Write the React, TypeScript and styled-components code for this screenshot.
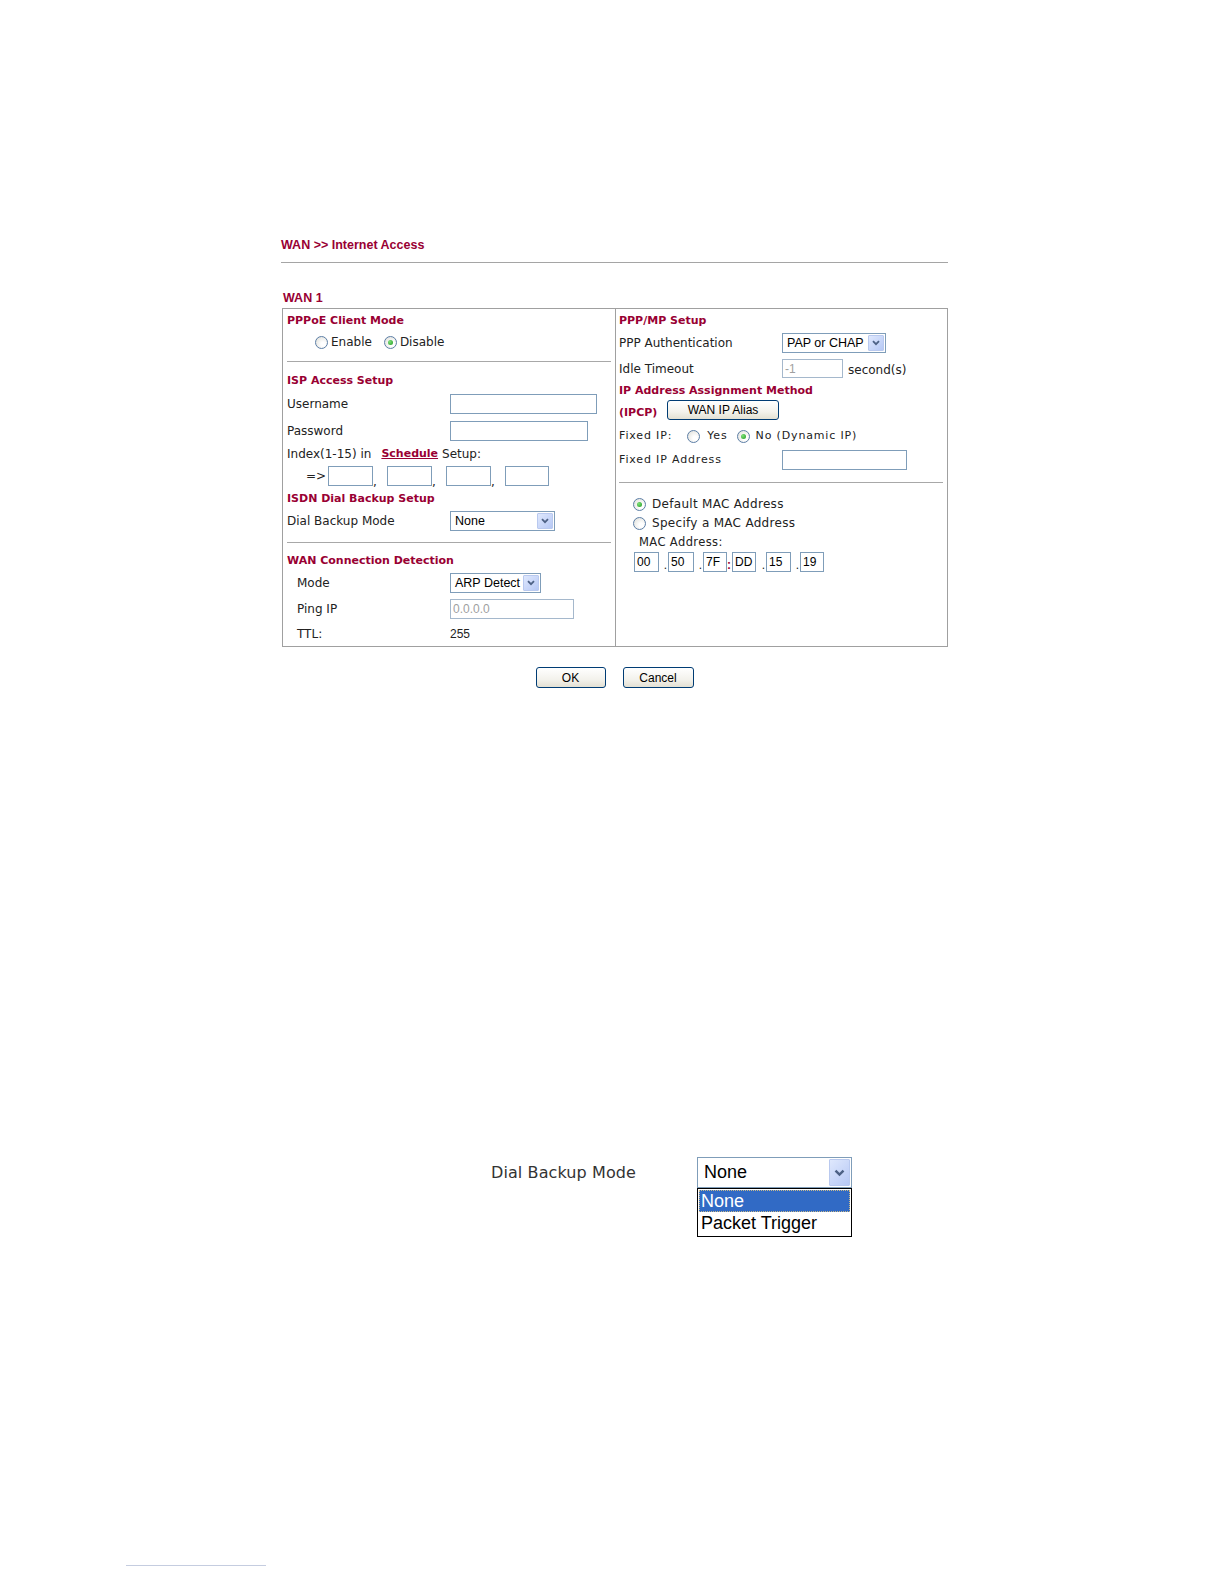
import { createGlobalStyle, styled } from 'styled-components';

const GlobalStyle = createGlobalStyle`
  html, body { margin: 0; padding: 0; background: #fff; overflow: hidden; }
  body { font-family: 'DejaVu Sans', Verdana, sans-serif; color: #222; }
  * { box-sizing: border-box; }
`;

const Page = styled.div`
  width: 1224px;
  height: 1584px;
  overflow: hidden;
  padding-top: 237px;
  display: flex;
  flex-direction: column;
`;

const Sheet = styled.div`
  margin-left: 281px;
  width: 667px;
  display: flex;
  flex-direction: column;
`;

const Title = styled.div`
  font: bold 12.5px/16px 'Liberation Sans', Arial, sans-serif;
  color: #990033;
`;

const Rule = styled.div`
  margin-top: 9px;
  border-top: 1px solid #a5a5a5;
`;

const WanLabel = styled.div`
  margin: 27px 0 2px;
  padding-left: 2px;
  font: bold 12.5px/16px 'Liberation Sans', Arial, sans-serif;
  color: #990033;
`;

const Table = styled.div`
  margin-left: 1px;
  width: 666px;
  display: grid;
  grid-template-columns: 332px 332px;
  border: 1px solid #a0a0a0;
`;

const Column = styled.div<{ $right?: boolean }>`
  display: flex;
  flex-direction: column;
  padding: ${(p) => (p.$right ? '0 4px 0 3px' : '0 4px')};
  border-left: ${(p) => (p.$right ? '1px solid #a0a0a0' : 'none')};
`;

const Heading = styled.span<{ $w?: number }>`
  font: bold 11px/14px 'DejaVu Sans', Verdana, sans-serif;
  color: #990033;
  width: ${(p) => (p.$w ? `${p.$w}px` : 'auto')};
`;

const Row = styled.div<{ $h: number; $indent?: number; $align?: string; $pb?: number }>`
  display: flex;
  align-items: ${(p) => p.$align ?? 'center'};
  height: ${(p) => p.$h}px;
  padding-left: ${(p) => p.$indent ?? 0}px;
  padding-bottom: ${(p) => p.$pb ?? 0}px;
`;

const FieldRow = styled.div<{ $h: number }>`
  display: grid;
  grid-template-columns: 163px auto;
  justify-content: start;
  align-items: center;
  height: ${(p) => p.$h}px;
`;

const Text = styled.span<{ $small?: boolean; $indent?: number; $gap?: number }>`
  font-size: ${(p) => (p.$small ? '11px' : '12px')};
  letter-spacing: ${(p) => (p.$small ? '0.85px' : '0')};
  line-height: 14px;
  padding-left: ${(p) => p.$indent ?? 0}px;
  margin-left: ${(p) => p.$gap ?? 0}px;
  white-space: nowrap;
`;

const WideText = styled(Text)`
  letter-spacing: 0.3px;
`;

const Divider = styled.div<{ $mt: number; $mb: number }>`
  margin: ${(p) => p.$mt}px 0 ${(p) => p.$mb}px;
  border-top: 1px solid #a8a8a8;
`;

const LinkText = styled.span`
  font: bold 11px/14px 'DejaVu Sans', Verdana, sans-serif;
  color: #990033;
  text-decoration: underline;
  margin-left: 10px;
`;

const TextBox = styled.input<{ $w: number; $h?: number; $muted?: boolean }>`
  width: ${(p) => p.$w}px;
  height: ${(p) => p.$h ?? 20}px;
  border: 1px solid ${(p) => (p.$muted ? '#a5b8cc' : '#7f9db9')};
  padding: 0 2px;
  margin: 0;
  font: 12px 'Liberation Sans', Arial, sans-serif;
  color: ${(p) => (p.$muted ? '#a0a0a0' : '#000')};
  background: #fff;
  outline: none;
`;

const Comma = styled.span`
  width: 14px;
  font-size: 12px;
  align-self: flex-end;
  line-height: 14px;
`;

const Arrow = styled.span<{ $big?: boolean }>`
  width: ${(p) => (p.$big ? 21 : 16)}px;
  height: ${(p) => (p.$big ? 27 : 16)}px;
  margin-right: 1px;
  display: flex;
  align-items: center;
  justify-content: center;
  border: 1px solid #b9c9ef;
  border-radius: 1px;
  background: linear-gradient(135deg, #dfe8fd, #b6c8f5);
`;

const SelectBox = styled.div<{ $w: number; $big?: boolean }>`
  width: ${(p) => p.$w}px;
  height: ${(p) => (p.$big ? 31 : 20)}px;
  display: flex;
  align-items: center;
  justify-content: space-between;
  border: 1px solid #7f9db9;
  background: #fff;
  font: ${(p) => (p.$big ? '18px' : '12.5px')} 'Liberation Sans', Arial, sans-serif;
  color: #000;
  padding-left: ${(p) => (p.$big ? 6 : 4)}px;
`;

const RadioDot = styled.span<{ $checked?: boolean }>`
  width: 13px;
  height: 13px;
  flex: none;
  border-radius: 50%;
  border: 1px solid #5c7ea6;
  background: radial-gradient(circle at 65% 65%, #ffffff 20%, #dcdcd6 100%);
  display: flex;
  align-items: center;
  justify-content: center;
  &::after {
    content: '';
    display: ${(p) => (p.$checked ? 'block' : 'none')};
    width: 5px;
    height: 5px;
    border-radius: 50%;
    background: radial-gradient(circle at 35% 35%, #7ee07a, #1f9a1f);
  }
`;

const Radio = styled.label<{ $gap?: number; $ml?: number }>`
  display: flex;
  align-items: center;
  gap: ${(p) => p.$gap ?? 3}px;
  margin-left: ${(p) => p.$ml ?? 0}px;
`;

const XpButton = styled.button<{ $w: number }>`
  width: ${(p) => p.$w}px;
  height: 21px;
  padding: 0;
  border: 1px solid #003c74;
  border-radius: 3px;
  background: linear-gradient(#ffffff, #f3f2ec 60%, #e3e0d3);
  font: 12px 'Liberation Sans', Arial, sans-serif;
  color: #000;
`;

const MacRow = styled.div`
  display: flex;
  align-items: center;
  height: 20px;
  padding-left: 15px;
`;

const MacSep = styled.span<{ $w: number; $colon?: boolean }>`
  width: ${(p) => p.$w}px;
  text-align: right;
  padding-right: 1px;
  font: ${(p) => (p.$colon ? 'bold 12px' : '12px')} 'Liberation Sans', Arial, sans-serif;
  color: ${(p) => (p.$colon ? '#990033' : '#222')};
  line-height: 14px;
  align-self: flex-end;
`;

const ButtonBar = styled.div`
  margin-top: 20px;
  display: flex;
  justify-content: center;
  gap: 17px;
`;

const Figure = styled.div`
  margin: 469px 0 0 491px;
  display: flex;
  align-items: flex-start;
`;

const FigureLabel = styled.span`
  width: 206px;
  font-size: 16px;
  letter-spacing: 0.1px;
  line-height: 31px;
  color: #333;
`;

const Dropdown = styled.div`
  display: flex;
  flex-direction: column;
  width: 155px;
`;

const OptionList = styled.div`
  border: 1px solid #000;
  display: flex;
  flex-direction: column;
  padding: 1px;
  font: 18px 'Liberation Sans', Arial, sans-serif;
`;

const Option = styled.div<{ $active?: boolean; $h: number }>`
  height: ${(p) => p.$h}px;
  line-height: ${(p) => p.$h}px;
  padding-left: 2px;
  background: ${(p) => (p.$active ? '#316ac5' : 'transparent')};
  color: ${(p) => (p.$active ? '#fff' : '#000')};
  outline: ${(p) => (p.$active ? '1px dotted #c9b98a' : 'none')};
  outline-offset: -1px;
`;

const FootRule = styled.div`
  margin: 328px 0 0 126px;
  width: 140px;
  border-top: 1px solid #c5cde0;
`;

const Chevron = ({ big }: { big?: boolean }) => (
  <svg width={big ? 11 : 8} height={big ? 8 : 6} viewBox="0 0 8 6">
    <path d="M1 1.2 L4 4.2 L7 1.2" fill="none" stroke="#4d6185" strokeWidth="1.8" />
  </svg>
);

const Select = ({ w, value, big }: { w: number; value: string; big?: boolean }) => (
  <SelectBox $w={w} $big={big}>
    <span>{value}</span>
    <Arrow $big={big}>
      <Chevron big={big} />
    </Arrow>
  </SelectBox>
);

const macParts = [
  { v: '00', w: 25, sep: 0 },
  { v: '50', w: 26, sep: 9 },
  { v: '7F', w: 24, sep: 9 },
  { v: 'DD', w: 24, sep: 5, colon: true },
  { v: '15', w: 25, sep: 10 },
  { v: '19', w: 24, sep: 9 },
];

export default function App() {
  return (
    <Page>
      <GlobalStyle />
      <Sheet>
        <Title>WAN &gt;&gt; Internet Access</Title>
        <Rule />
        <WanLabel>WAN 1</WanLabel>
        <Table>
          <Column>
            <Row $h={24}>
              <Heading>PPPoE Client Mode</Heading>
            </Row>
            <Row $h={18} $indent={28}>
              <Radio>
                <RadioDot />
                <Text>Enable</Text>
              </Radio>
              <Radio $ml={12}>
                <RadioDot $checked />
                <Text>Disable</Text>
              </Radio>
            </Row>
            <Divider $mt={10} $mb={9} />
            <Row $h={20}>
              <Heading>ISP Access Setup</Heading>
            </Row>
            <FieldRow $h={26}>
              <Text>Username</Text>
              <TextBox $w={147} readOnly />
            </FieldRow>
            <FieldRow $h={28}>
              <Text>Password</Text>
              <TextBox $w={138} readOnly />
            </FieldRow>
            <Row $h={18}>
              <Text>Index(1-15) in</Text>
              <LinkText>Schedule</LinkText>
              <Text $gap={4}>Setup:</Text>
            </Row>
            <Row $h={26} $indent={19}>
              <Text style={{ width: 22 }}>=&gt;</Text>
              <TextBox $w={45} readOnly />
              <Comma>,</Comma>
              <TextBox $w={45} readOnly />
              <Comma>,</Comma>
              <TextBox $w={45} readOnly />
              <Comma>,</Comma>
              <TextBox $w={44} readOnly />
            </Row>
            <Row $h={20}>
              <Heading>ISDN Dial Backup Setup</Heading>
            </Row>
            <FieldRow $h={24}>
              <Text>Dial Backup Mode</Text>
              <Select w={105} value="None" />
            </FieldRow>
            <Divider $mt={9} $mb={9} />
            <Row $h={18}>
              <Heading>WAN Connection Detection</Heading>
            </Row>
            <FieldRow $h={26}>
              <Text $indent={10}>Mode</Text>
              <Select w={91} value="ARP Detect" />
            </FieldRow>
            <FieldRow $h={26}>
              <Text $indent={10}>Ping IP</Text>
              <TextBox $w={124} $muted defaultValue="0.0.0.0" readOnly />
            </FieldRow>
            <FieldRow $h={24}>
              <Text $indent={10}>TTL:</Text>
              <Text style={{ fontFamily: "'Liberation Sans', Arial, sans-serif" }}>255</Text>
            </FieldRow>
          </Column>

          <Column $right>
            <Row $h={24}>
              <Heading>PPP/MP Setup</Heading>
            </Row>
            <FieldRow $h={20}>
              <Text>PPP Authentication</Text>
              <Select w={104} value="PAP or CHAP" />
            </FieldRow>
            <FieldRow $h={31}>
              <Text>Idle Timeout</Text>
              <Row $h={31}>
                <TextBox $w={61} $h={19} $muted defaultValue="-1" readOnly />
                <Text $gap={5} style={{ marginTop: 3 }}>
                  second(s)
                </Text>
              </Row>
            </FieldRow>
            <Row $h={14}>
              <Heading>IP Address Assignment Method</Heading>
            </Row>
            <Row $h={24} $align="flex-end" $pb={2}>
              <Heading $w={48}>(IPCP)</Heading>
              <XpButton $w={112} style={{ height: 20 }}>
                WAN IP Alias
              </XpButton>
            </Row>
            <Row $h={28}>
              <Text $small>Fixed IP:</Text>
              <Radio $ml={15} $gap={7}>
                <RadioDot />
                <Text $small>Yes</Text>
              </Radio>
              <Radio $ml={9} $gap={6}>
                <RadioDot $checked />
                <Text $small>No (Dynamic IP)</Text>
              </Radio>
            </Row>
            <FieldRow $h={20}>
              <Text $small>Fixed IP Address</Text>
              <TextBox $w={125} readOnly />
            </FieldRow>
            <Divider $mt={12} $mb={11} />
            <Row $h={20} $indent={14}>
              <Radio $gap={6}>
                <RadioDot $checked />
                <WideText>Default MAC Address</WideText>
              </Radio>
            </Row>
            <Row $h={18} $indent={14}>
              <Radio $gap={6}>
                <RadioDot />
                <WideText>Specify a MAC Address</WideText>
              </Radio>
            </Row>
            <Row $h={20} $indent={20}>
              <Text style={{ fontSize: 11.5, letterSpacing: 0.4 }}>MAC Address:</Text>
            </Row>
            <MacRow>
              {macParts.map((m) => (
                <span key={m.v} style={{ display: 'contents' }}>
                  {m.sep > 0 && (
                    <MacSep $w={m.sep} $colon={m.colon}>
                      {m.colon ? ':' : '.'}
                    </MacSep>
                  )}
                  <TextBox $w={m.w} defaultValue={m.v} readOnly />
                </span>
              ))}
            </MacRow>
          </Column>
        </Table>
        <ButtonBar>
          <XpButton $w={70}>OK</XpButton>
          <XpButton $w={71}>Cancel</XpButton>
        </ButtonBar>
      </Sheet>

      <Figure>
        <FigureLabel>Dial Backup Mode</FigureLabel>
        <Dropdown>
          <Select w={155} value="None" big />
          <OptionList>
            <Option $active $h={22}>
              None
            </Option>
            <Option $h={23}>Packet Trigger</Option>
          </OptionList>
        </Dropdown>
      </Figure>

      <FootRule />
    </Page>
  );
}
